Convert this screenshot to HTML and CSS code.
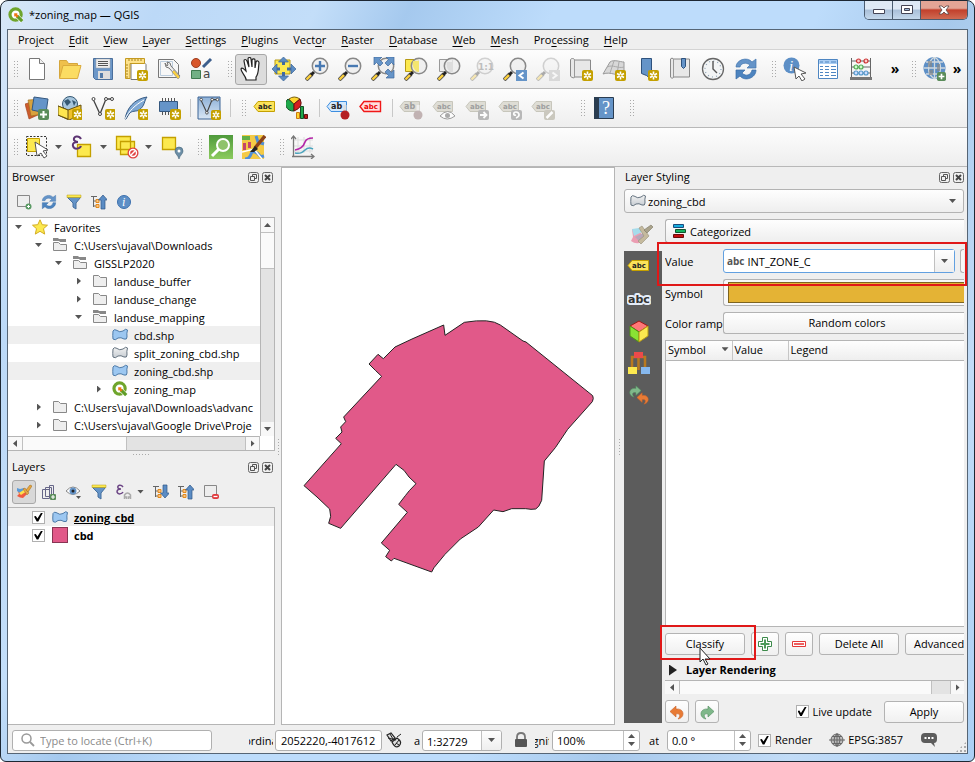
FILE: index.html
```html
<!DOCTYPE html>
<html lang="en">
<head>
<meta charset="utf-8">
<title>*zoning_map — QGIS</title>
<link rel="stylesheet" href="styles.css">
</head>
<body>
<svg class="paints" aria-hidden="true">
  <linearGradient id="gBlue" x1="0" y1="0" x2="0" y2="1"><stop offset="0" stop-color="#8fb2d8"/><stop offset="1" stop-color="#d9e6f4"/></linearGradient>
  <linearGradient id="gGreen" x1="0" y1="0" x2="0" y2="1"><stop offset="0" stop-color="#4f9a3c"/><stop offset="1" stop-color="#8ccb5e"/></linearGradient>
  <linearGradient id="gGrey" x1="0" y1="0" x2="0" y2="1"><stop offset="0" stop-color="#f2f2f2"/><stop offset="1" stop-color="#c6ccd2"/></linearGradient>
</svg>
<svg class="defs" aria-hidden="true">
  <symbol id="star-badge" viewBox="0 0 11 11"><rect width="11" height="11" rx="2" fill="#c4a000"/><path d="M5.500 1.500v8M2 3.500l7 4M9 3.500l-7 4" stroke="#fff" stroke-width="1.600"/><circle cx="5.500" cy="5.500" r="1" fill="#c4a000"/></symbol>
  <symbol id="plus-badge" viewBox="0 0 11 11"><rect width="11" height="11" rx="2" fill="#5a8c5a"/><path d="M5.500 2v7M2 5.500h7" stroke="#fff" stroke-width="2"/></symbol>
  <symbol id="lens" viewBox="0 0 24 24"><path d="M1 23l6-6" stroke="#555" stroke-width="4"/><path d="M1.500 22.500l5-5" stroke="#fcd03c" stroke-width="2.400"/><path d="M6 18l3-3" stroke="#222" stroke-width="3"/><circle cx="15" cy="9" r="7.700" fill="#eee" fill-opacity=".8" stroke="#888" stroke-width="1.500"/></symbol>
  <symbol id="qgis" viewBox="0 0 18 18"><circle cx="8.500" cy="8.500" r="6.300" fill="#fff" stroke="#6fa52c" stroke-width="3.600"/><path d="M9 9l7 7" stroke="#fff" stroke-width="5"/><path d="M10 10l6 6" stroke="#5f9c26" stroke-width="3.600"/><path d="M7 7h4l-1 1 2 2-2 2-2-2-1 1z" fill="#ee7913"/></symbol>
  <symbol id="new" viewBox="0 0 24 24"><path d="M4.500 1.500h10l5 5v16h-15z" fill="#fff" stroke="#777"/><path d="M14.500 1.500v5h5" fill="#eee" stroke="#777"/></symbol>
  <symbol id="open" viewBox="0 0 24 24"><path d="M1.500 21V3.500h7l2 3h9V10" fill="#efc04c" stroke="#d5a63b"/><path d="M1.500 21.500L5 8.500h18l-3.500 13z" fill="#fbdc62" stroke="#dbab3c"/></symbol>
  <symbol id="save" viewBox="0 0 24 24"><path d="M2.500 1.500h19v21h-17l-2-2z" fill="#6c97c8" stroke="#4a6f9c"/><path d="M5 2h14v9H5z" fill="#eee" stroke="#aaa" stroke-width=".5"/><path d="M7 4.500h10M7 6.500h10M7 8.500h10" stroke="#555"/><path d="M7 14h12v8H7z" fill="#ddd"/><path d="M9 16h3v5H9z" fill="#527aa8"/></symbol>
  <symbol id="layout" viewBox="0 0 24 24"><path d="M7 3.500h11l4 4v15H7z" fill="#fff" stroke="#777"/><path d="M1.500 1.500h19v5H6v15H1.500z" fill="#fde28b" stroke="#c49a20"/><path d="M5 2v2M8 2v2M11 2v2M14 2v2M17 2v2M2 8h2M2 11h2M2 14h2M2 17h2M2 20h2" stroke="#a9821b"/><use href="#star-badge" x="13" y="13" width="11" height="11"/></symbol>
  <symbol id="manager" viewBox="0 0 24 24"><path d="M1.500 2.500h15l5 5v13h-20z" fill="#f7f7f7" stroke="#777"/><path d="M3.500 4.500h12v14h-12z" fill="none" stroke="#bcd"/><path d="M8 6l1 4 3 1 9 10 2-2-9-10-1-3-3-1 1 3-1 1z" fill="#eee" stroke="#777"/><path d="M15 15l6 7 2-2-6-7z" fill="#fcd03c" stroke="#999" stroke-width=".7"/></symbol>
  <symbol id="styles" viewBox="0 0 24 24"><circle cx="6" cy="6" r="4.500" fill="#d8562a" stroke="#9d3e20"/><path d="M13 10l8-8" stroke="#3c5e8c" stroke-width="3"/><path d="M1.500 13.500h9v8h-9z" fill="#72b085" stroke="#3f7a4f"/><text x="13" y="21" class="glyph" font-size="12" fill="#444">a</text></symbol>
  <symbol id="hand" viewBox="0 0 24 24"><path d="M7 22c-1-4-5-7-5-10 1-2 3 0 5 2L5 4c0-2 2-2 3 0l2 6-1-8c0-2 3-2 3 0l1 8V3c1-2 3-1 3 0v8l1-6c1-2 3-1 3 1-1 7 0 10-3 14v3H7z" fill="#fff" stroke="#222" stroke-width="1.200"/></symbol>
  <symbol id="pansel" viewBox="0 0 24 24"><path d="M3 3h15v14H3z" fill="#fce94f" stroke="#b79a15"/><path d="M11.500 8V4M11.500 15v4M8 12H4M15 12h4" stroke="#3f6ba3" stroke-width="3"/><path d="M11.500 0l5 5h-10zM11.500 24l5-5h-10zM0 12l5-5v10zM24 12l-5-5v10z" fill="#5b8cc4" stroke="#3c6595" stroke-width=".7"/></symbol>
  <symbol id="zin" viewBox="0 0 24 24"><use href="#lens"/><path d="M15 4v10M10 9h10" stroke="#4879b2" stroke-width="2.400"/></symbol>
  <symbol id="zout" viewBox="0 0 24 24"><use href="#lens"/><path d="M10 9h10" stroke="#4879b2" stroke-width="2.400"/></symbol>
  <symbol id="zfull" viewBox="0 0 24 24"><use href="#lens"/><path d="M3 0h8L8.500 2.500 12 6 9 9 5.500 5.500 3 8zM23 0v8l-2.500-2.500L17 9l-3-3 3.500-3.500L15 0zM23 21h-8l2.500-2.500L14 15l3-3 3.500 3.500L23 13z" fill="#6594c8" stroke="#40699b" stroke-width=".7"/></symbol>
  <symbol id="zsel" viewBox="0 0 24 24"><path d="M1.500 2.500h13v12h-13z" fill="#fce94f" stroke="#b79a15"/><use href="#lens"/><path d="M9 4h6v11c-5 0-7-7-6-11z" fill="#f4e56e"/></symbol>
  <symbol id="zlayer" viewBox="0 0 24 24"><path d="M2.500 2.500h13v12h-13z" fill="#eee" stroke="#999"/><use href="#lens"/><path d="M10 5h5v10c-5-1-6-6-5-10z" fill="#ddd"/></symbol>
  <symbol id="znative" viewBox="0 0 24 24"><use href="#lens"/><text x="8" y="13" class="glyph bold" font-size="9" fill="#555">1:1</text></symbol>
  <symbol id="zprev" viewBox="0 0 24 24"><use href="#lens"/><path d="M13 13h11v11H13z" fill="#6594c8"/><path d="M20.500 15.500l-4 3 4 3" fill="none" stroke="#fff" stroke-width="2"/></symbol>
  <symbol id="znext" viewBox="0 0 24 24"><use href="#lens"/><path d="M13 13h11v11H13z" fill="#aaa"/><path d="M16.500 15.500l4 3-4 3" fill="none" stroke="#fff" stroke-width="2"/></symbol>
  <symbol id="mapview" viewBox="0 0 24 24"><path d="M1.500 3c0-2 4-2 4 0h16v17h-16c0 2-4 0-4-1z" fill="#e8e8e8" stroke="#888"/><path d="M5.500 3v17" stroke="#999"/><use href="#star-badge" x="13" y="13" width="11" height="11"/></symbol>
  <symbol id="map3d" viewBox="0 0 24 24"><path d="M1 17L8 5c4-3 10 0 14 0v12c-7 3-13-3-21 0z" fill="#d8d8d8" stroke="#999"/><path d="M5 10c6-3 11 2 17 0M12 4L8 16M17 5l-2 12" stroke="#aaa" fill="none"/><use href="#star-badge" x="13" y="13" width="11" height="11"/></symbol>
  <symbol id="bmnew" viewBox="0 0 24 24"><path d="M6.500 1.500h10v21l-5-4-5-2z" fill="#6594c8" stroke="#2e527d"/><use href="#star-badge" x="13" y="13" width="11" height="11"/></symbol>
  <symbol id="bookmarks" viewBox="0 0 24 24"><path d="M2.500 2c0-1 3-1 3 0h16v18h-16c0 2-3 1-3 0z" fill="#e8e8e8" stroke="#888"/><path d="M5.500 2v18" stroke="#999"/><path d="M13.500 1.500h4v8l-2 2-2-2z" fill="#6594c8" stroke="#2e527d"/></symbol>
  <symbol id="clock" viewBox="0 0 24 24"><circle cx="12" cy="12" r="10.500" fill="#f2f4f5" stroke="#666" stroke-width="1.300"/><circle cx="12" cy="12" r="8" fill="none" stroke="#8aa0b4" stroke-width="1.200" stroke-dasharray="1 3.190"/><path d="M12 4v8l4 4" stroke="#555" stroke-width="1.400" fill="none"/></symbol>
  <symbol id="refresh" viewBox="0 0 24 24"><path d="M2 10C2 3 13-1 18 5l4-3v9h-9l3-3C12 5 7 6 6 10z" fill="#6594c8" stroke="#4377b0" stroke-width=".7"/><path d="M22 13c0 8-11 12-16 6l-4 3v-9h9l-3 3c4 4 9 2 10-3z" fill="#4d84bf" stroke="#376ca6" stroke-width=".7"/></symbol>
  <symbol id="identify" viewBox="0 0 24 24"><circle cx="8.500" cy="8.500" r="8" fill="#5d8fc6"/><text x="6" y="14" class="serif" font-size="15" fill="#fff">i</text><path d="M11 10l12 6-5 1 4 5-3 2-3-5-3 3z" fill="#fff" stroke="#555"/></symbol>
  <symbol id="table" viewBox="0 0 24 24"><path d="M2.500 2.500h19v19h-19z" fill="#fff" stroke="#4e86c2"/><path d="M3 3h18v4H3z" fill="#a9cdf3"/><path d="M4 5h3M9 5h4M15 5h5M4 9.500h3M9 9.500h4M15 9.500h5M4 12.500h3M9 12.500h4M15 12.500h5M4 15.500h3M9 15.500h4M15 15.500h5M4 18.500h3M9 18.500h4M15 18.500h5" stroke="#4e86c2" stroke-width="1.200"/></symbol>
  <symbol id="abacus" viewBox="0 0 24 24"><path d="M2.500 1v20M21.500 1v20M2 4h20M2 10h20M2 16h20" stroke="#666"/><path d="M1 20h22v3H1z" fill="#777"/><g stroke-width="1.200"><g fill="#fcc" stroke="#c33"><circle cx="9.500" cy="4" r="2"/><circle cx="17" cy="4" r="2"/></g><g fill="#cfc" stroke="#5a5"><circle cx="7" cy="10" r="2"/><circle cx="12" cy="10" r="2"/></g><g fill="#cdf" stroke="#59c"><circle cx="7" cy="16" r="2"/><circle cx="12" cy="16" r="2"/><circle cx="17" cy="16" r="2"/></g></g></symbol>
  <symbol id="globe" viewBox="0 0 24 24"><circle cx="11.500" cy="11" r="11" fill="#5d8fc6"/><path d="M1 11h21M3 5h17M3 17h17M11.500 0v22M11.500 0c-8 5-8 17 0 22M11.500 0c8 5 8 17 0 22" stroke="#cfd8de" stroke-width="1.300" fill="none"/><path d="M5 4h4v6H5zM6 13h4v5H6zM14 7h3v7h-3z" fill="#888" opacity=".7"/><use href="#plus-badge" x="14" y="15" width="9" height="9"/></symbol>
  <symbol id="datasrc" viewBox="0 0 24 24"><path d="M0 8l9-3 4 14-9 4z" fill="#cd5c2c" stroke="#9c421c" stroke-width=".6"/><path d="M3 4l13-1 1 15-11 2z" fill="#d9a23e" stroke="#9a6c1e" stroke-width=".6"/><path d="M9 1l14 2-2 14-14-3z" fill="#6594c8" stroke="#35587f"/><use href="#plus-badge" x="13" y="13" width="11" height="11"/></symbol>
  <symbol id="gpkg" viewBox="0 0 24 24"><circle cx="12" cy="8" r="7.500" fill="#a6c5dd" stroke="#355872"/><path d="M6 5l4-2 3 3-4 4zM14 4l4 2-2 4z" fill="#355872"/><path d="M0 10l10 4 13-5v10l-12 5L0 19z" fill="#f0c12b" stroke="#665310"/><path d="M0 10l10 4v9L0 19z" fill="#ffe650" stroke="#665310"/><use href="#star-badge" x="14" y="13" width="11" height="11"/></symbol>
  <symbol id="vec" viewBox="0 0 24 24"><path d="M2 3l7 15L15 3h6" fill="none" stroke="#444" stroke-width="1.300"/><g fill="#fff" stroke="#444"><circle cx="2.500" cy="3" r="1.500"/><circle cx="9" cy="18" r="1.500"/><circle cx="15" cy="3" r="1.500"/><circle cx="21" cy="3" r="1.500"/></g></symbol>
  <symbol id="newshp" viewBox="0 0 24 24"><use href="#vec"/><use href="#star-badge" x="14" y="13" width="11" height="11"/></symbol>
  <symbol id="spatialite" viewBox="0 0 24 24"><path d="M1 23C3 12 10 3 23 1c-3 4-2 9-8 13-3 2-7 0-10 4l-3 5z" fill="#7fa8d4" stroke="#365a83"/><path d="M1 23C5 15 11 9 20 4" fill="none" stroke="#fff"/><use href="#star-badge" x="14" y="13" width="11" height="11"/></symbol>
  <symbol id="memory" viewBox="0 0 24 24"><path d="M5.500 2v17M8.500 2v17M11.500 2v17M14.500 2v17M17.500 2v17" stroke="#555"/><path d="M2.500 5.500h18v10h-18z" fill="#6594c8" stroke="#35587f"/><use href="#star-badge" x="13" y="13" width="11" height="11"/></symbol>
  <symbol id="virtual" viewBox="0 0 24 24"><path d="M1 1h22v22H1z" fill="url(#gBlue)" stroke="#3c6595"/><use href="#vec" x="2" y="1" width="21" height="21"/><use href="#star-badge" x="14" y="14" width="10" height="10"/></symbol>
  <symbol id="label" viewBox="0 0 24 24"><path d="M5 5.500h16.500v10H5L1 10.500z" fill="#fbe35a" stroke="#c4a000"/><text x="5" y="13" class="glyph bold" font-size="7" fill="#222">abc</text></symbol>
  <symbol id="labelblue" viewBox="0 0 24 24"><path d="M5 5.500h15.500v10H5L1 10.500z" fill="#d4e8fc" stroke="#3c8ee0"/><text x="5" y="13" class="glyph bold" font-size="8" fill="#222">ab</text><path d="M19 9v9" stroke="#ddd" stroke-width="3"/><circle cx="19" cy="19" r="4.500" fill="#b52025"/></symbol>
  <symbol id="labelred" viewBox="0 0 24 24"><path d="M5 5.500h16.500v10H5L1 10.500z" fill="#fdd" stroke="#f01818" stroke-width="1.400"/><text x="5" y="13" class="glyph bold" font-size="7" fill="#e00">abc</text></symbol>
  <symbol id="labelgrey" viewBox="0 0 24 24"><path d="M5 5.500h15.500v10H5L1 10.500z" fill="#d9d7cd" stroke="#bdbbae"/><text x="5" y="13" class="glyph bold" font-size="7" fill="#888">abc</text></symbol>
  <symbol id="pin" viewBox="0 0 24 24"><path d="M5 5.500h15.500v10H5L1 10.500z" fill="#d9d7cd" stroke="#bdbbae"/><text x="5" y="13" class="glyph bold" font-size="8" fill="#888">ab</text><path d="M19 9v9" stroke="#eee" stroke-width="3"/><circle cx="19" cy="19" r="4.500" fill="#b5a3a3"/></symbol>
  <symbol id="eyelab" viewBox="0 0 24 24"><use href="#labelgrey"/><path d="M8 20q8-9 15 0-8 6-15 0z" fill="#fff" stroke="#888"/><circle cx="15.500" cy="19.500" r="2.500" fill="#999"/></symbol>
  <symbol id="movelab" viewBox="0 0 24 24"><use href="#labelgrey"/><rect x="13" y="14" width="11" height="10" rx="2" fill="#aaa"/><path d="M15 19h6M18.500 16l3 3-3 3" stroke="#fff" stroke-width="1.800" fill="none"/></symbol>
  <symbol id="rotlab" viewBox="0 0 24 24"><use href="#labelgrey"/><rect x="13" y="14" width="11" height="10" rx="2" fill="#aaa"/><path d="M18 22c5-2 3-6 0-6s-3 4 0 3" stroke="#fff" stroke-width="1.700" fill="none"/></symbol>
  <symbol id="editlab" viewBox="0 0 24 24"><use href="#labelgrey"/><rect x="13" y="14" width="11" height="10" rx="2" fill="#c1beb2"/><path d="M15.500 22l6-6" stroke="#fff" stroke-width="2.500"/></symbol>
  <symbol id="diagram" viewBox="0 0 24 24"><path d="M8 8L2 3a8 7 0 0 0 6 12z" fill="#1fa84b" stroke="#174d25"/><path d="M8 8L3 3q5-4 11 0z" fill="#ffd52e" stroke="#765f12"/><path d="M8 8l6-5q4 8-6 12z" fill="#d62020" stroke="#641010"/><path d="M10.500 16.500h3v6h-3z" fill="#ffd52e" stroke="#c97a12"/><path d="M14.500 10.500h3v12h-3z" fill="#1fa84b" stroke="#174d25"/><path d="M18.500 18.500h3v4h-3z" fill="#c01818" stroke="#641010"/></symbol>
  <symbol id="help" viewBox="0 0 24 24"><path d="M2.500 1.500h19v21h-19z" fill="#6594c8" stroke="#2a3c50"/><path d="M2 1h5v22H2z" fill="#2a3c50"/><text x="10" y="18" class="serif upright" font-size="18" fill="#fff">?</text></symbol>
  <symbol id="select" viewBox="0 0 24 24"><path d="M1.500 1.500h20v19h-20z" fill="none" stroke="#333" stroke-dasharray="2 1.500"/><path d="M2.500 3.500h12v13h-12z" fill="#fce94f" stroke="#c4a000"/><path d="M10 7l13 8-5 1 4 5-3 2-3-5-4 3z" fill="#fff" stroke="#555"/></symbol>
  <symbol id="selexpr" viewBox="0 0 24 24"><path d="M7.500 9.500h13v12h-13z" fill="#fce94f" stroke="#c4a000" stroke-width="1.300"/><path d="M11 4C9 0 3 1 4 5q1 2 4 2-6 0-5 4c1 4 7 3 8 0" fill="none" stroke="#5d3473" stroke-width="2"/></symbol>
  <symbol id="desel" viewBox="0 0 24 24"><path d="M1.500 1.500h14v13h-14zM5.500 6.500h14v13h-14z" fill="#fce94f" stroke="#c4a000" stroke-width="1.300"/><circle cx="18" cy="18" r="5.500" fill="#e04040"/><circle cx="18" cy="18" r="3.500" fill="none" stroke="#fff" stroke-width="1.400"/><path d="M15.500 20.500l5-5" stroke="#fff" stroke-width="1.500"/></symbol>
  <symbol id="selloc" viewBox="0 0 24 24"><path d="M2.500 2.500h13v12h-13z" fill="#fce94f" stroke="#c4a000" stroke-width="1.300"/><path d="M19 24c-1-4-4-5-4-8a4 4 0 0 1 8 0c0 3-3 4-4 8z" fill="#6c8ea6" stroke="#456478" stroke-width=".6"/><circle cx="19" cy="16" r="1.500" fill="#fff"/></symbol>
  <symbol id="osmsearch" viewBox="0 0 24 24"><path d="M0 0h24v24H0z" fill="url(#gGreen)"/><circle cx="14" cy="10" r="6" fill="#8fc36b" stroke="#fff" stroke-width="2"/><path d="M3 21l7-7" stroke="#fff" stroke-width="3"/></symbol>
  <symbol id="osm" viewBox="0 0 24 24"><path d="M0 0h22v24H0z" fill="#f4ca45"/><path d="M0 1h8v4H0z" fill="#62b046"/><path d="M3 24c8 0 4-9 10-7s3 6 9 4M14 1l2 6 6 2" fill="none" stroke="#4f8fd8" stroke-width="3"/><path d="M1 8h3v7H1zM6 7h3v6H6z" fill="#c4456a"/><path d="M0 17l12-3 8 10" stroke="#fff" stroke-width="1.500" fill="none"/><path d="M13 13L23 1" stroke="#8a431c" stroke-width="3.500"/><path d="M8 17l5-6 3 3-4 3z" fill="#222"/></symbol>
  <symbol id="profile" viewBox="0 0 24 24"><path d="M7 2v16M13 2v16M19 2v16M3 5h19M3 11h19M3 16h19" stroke="#ddd"/><path d="M2.500 22V2M0 4l2.500-3L5 4M1 21.500h21M20 19l3 2.500-3 2.500" fill="none" stroke="#777" stroke-width="1.300"/><path d="M4 15c7-1 9-5 10-8s4-4 8-4" fill="none" stroke="#b426a8" stroke-width="1.700"/><path d="M4 18c6 1 8-1 10-3s4-3 8-1" fill="none" stroke="#4aa3bd" stroke-width="1.600"/></symbol>
  <symbol id="addlayer" viewBox="0 0 16 16"><path d="M1.500 1.500h12v11h-12z" fill="#eee" stroke="#888"/><circle cx="12.500" cy="12.500" r="3" fill="#5a9a64"/><path d="M11 12.500h3M12.500 11v3" stroke="#fff"/></symbol>
  <symbol id="funnel" viewBox="0 0 16 16"><path d="M1.500 3.500h13L10 9v6l-3-2V9z" fill="#6594c8" stroke="#456f9e"/><path d="M1 1h14v2.500H1z" fill="#fce94f" stroke="#b79a15" stroke-width=".5"/></symbol>
  <symbol id="tree" viewBox="0 0 16 16"><path d="M0 2.500h6M2.500 2v11M2.500 7h4M2.500 12h4" stroke="#666" fill="none"/><path d="M5 5.500h3v3H5zM5 10.500h3v3H5z" fill="#ffc37d" stroke="#e28a1e"/></symbol>
  <symbol id="collapse" viewBox="0 0 16 16"><use href="#tree"/><path d="M10 15V6H7.500L12 1l4.500 5H14v9z" fill="#5b8cc4" stroke="#2e5687" stroke-width=".7"/></symbol>
  <symbol id="expand" viewBox="0 0 16 16"><use href="#tree"/><path d="M10 1v8H7.500l4.500 5 4.500-5H14V1z" fill="#5b8cc4" stroke="#2e5687" stroke-width=".7"/></symbol>
  <symbol id="info" viewBox="0 0 16 16"><circle cx="8" cy="8" r="6.500" fill="#5d8fc6" stroke="#3c70ae"/><text x="6" y="12" class="serif" font-size="12" fill="#fff">i</text></symbol>
  <symbol id="brush" viewBox="0 0 16 16"><path d="M1 5l4 1 3-2 4 5-5 5q-3 0-6-2l2-2z" fill="#f05a40"/><path d="M1 4l3 1 4-1 1 2-5 3-3-2z" fill="#5b9bd8"/><path d="M3 9l6-4 2 2-6 4z" fill="#ffe04a"/><path d="M7 5l2-1 4 5-2 2z" fill="#e2a34a" stroke="#a57425" stroke-width=".5"/><path d="M10 6l4-5 2 1-4 6z" fill="#e9a63b" stroke="#a57425" stroke-width=".6"/></symbol>
  <symbol id="palebrush" viewBox="0 0 24 24"><path d="M2 6l7 1 5 8-5 5q-4 1-8-2l2-4z" fill="#eb9db2"/><path d="M2 6l7-1 3 4-8 4z" fill="#a5dceb"/><path d="M5 14l8-4 3 4-6 5z" fill="#b8a7b9"/><path d="M9 5l3-2 7 10-8 8-3-3 6-5z" fill="#c5ba9e" stroke="#968e78" stroke-width=".6"/><path d="M14 7l7-5 2 2-6 6z" fill="#aaa38c" stroke="#7c7762" stroke-width=".6"/></symbol>
  <symbol id="group" viewBox="0 0 16 16"><path d="M1.500 5.500h7v9h-7zM4.500 3.500h6v9h-6zM8.500 1.500h4v10h-4z" fill="#eee" stroke="#668"/><use href="#plus-badge" x="9" y="10" width="6" height="6"/></symbol>
  <symbol id="eye" viewBox="0 0 16 16"><path d="M0 7q7-8 14 0-7 7-14 0z" fill="#fff" stroke="#888"/><circle cx="7" cy="7" r="3.500" fill="#6594c8"/><circle cx="7" cy="7" r="1.500" fill="#222"/><path d="M10 12h5l-2.500 3z" fill="#555"/></symbol>
  <symbol id="exprfilter" viewBox="0 0 16 16"><path d="M7 3C5 0 1 1 2 4q1 1 3 1-4 0-4 3c1 3 5 2 6 0" fill="none" stroke="#6c4585" stroke-width="1.500"/><path d="M8.500 15v-4q3-4 6 0v4M8.500 13h2v2M14.500 13h-2v2" fill="none" stroke="#aaa" stroke-width="1.500"/></symbol>
  <symbol id="remove" viewBox="0 0 16 16"><path d="M1.500 1.500h12v11h-12z" fill="#eee" stroke="#888"/><rect x="9" y="10" width="7" height="5" rx="2" fill="#e0393c"/><path d="M10.500 12.500h4" stroke="#fff" stroke-width="1.300"/></symbol>
  <symbol id="star" viewBox="0 0 16 16"><path d="M8 .8l2.200 4.900 5.300.5-4 3.500 1.200 5.400L8 12.300l-4.700 2.800 1.200-5.400-4-3.500 5.300-.5z" fill="#fce94f" stroke="#d3ac20"/></symbol>
  <symbol id="folder" viewBox="0 0 16 16"><path d="M1.500 13.500v-11h5l2 2h6v9z" fill="#eee" stroke="#888"/></symbol>
  <symbol id="folderopen" viewBox="0 0 16 16"><path d="M1 1h5l1 1h7v3H8L7 4H1z" fill="#888"/><path d="M1.500 13.500v-8h5l2 2h6v6z" fill="#eee" stroke="#888"/></symbol>
  <symbol id="polyblue" viewBox="0 0 16 14"><path d="M1 3Q2 1 4 2Q8 5 11 3Q14 0 15.500 2Q14.500 5 15 9Q15 12 12 11Q9 9 6 10Q3 13 1 11Q.500 8 1 3z" fill="#9cc7f1" stroke="#4d7aa8"/></symbol>
  <symbol id="polygrey" viewBox="0 0 16 14"><path d="M1 3Q2 1 4 2Q8 5 11 3Q14 0 15.500 2Q14.500 5 15 9Q15 12 12 11Q9 9 6 10Q3 13 1 11Q.500 8 1 3z" fill="url(#gGrey)" stroke="#657380"/></symbol>
  <symbol id="float" viewBox="0 0 11 11"><rect x=".5" y=".5" width="10" height="10" rx="2" fill="none" stroke="#666"/><path d="M4.500 4.500V2.500h4v4h-2M2.500 4.500h4v4h-4z" fill="none" stroke="#555"/></symbol>
  <symbol id="close" viewBox="0 0 11 11"><rect x=".5" y=".5" width="10" height="10" rx="2" fill="none" stroke="#666"/><path d="M3 3l5 5M8 3l-5 5" stroke="#444" stroke-width="2"/></symbol>
  <symbol id="categ" viewBox="0 0 14 14"><path d="M.5 .500h10v3H.5z" fill="#17aee0" stroke="#1a4c7c"/><path d="M2.500 5.500h10v3h-10z" fill="#13b560" stroke="#11532d"/><path d="M.5 10.500h10v3H.5z" fill="#c71010" stroke="#6a0c0c"/></symbol>
  <symbol id="halo" viewBox="0 0 24 24"><text x="1" y="16" class="glyph bold halo" font-size="11" fill="#333">abc</text></symbol>
  <symbol id="cube" viewBox="0 0 24 24"><path d="M12 2l9 5-9 6-9-6z" fill="#f77" stroke="#a11616"/><path d="M3 7l9 6v10l-9-6z" fill="#8ae234" stroke="#4e8f16"/><path d="M21 7l-9 6v10l9-6z" fill="#fce94f" stroke="#b79a15"/></symbol>
  <symbol id="diagrams" viewBox="0 0 24 24"><path d="M5 16V6h13v10M11.500 7v12" fill="none" stroke="#b9791f" stroke-width="2.500"/><path d="M7 1h9v6H7z" fill="#ec4a4a"/><path d="M1 16h9v7H1z" fill="#fce94f"/><path d="M14 16h9v7h-9z" fill="#86b8ee"/></symbol>
  <symbol id="undo" viewBox="0 0 16 16"><path d="M7 2v3c9-1 9 9 2 10 3-3 2-6-2-5v3L1 7.500z" fill="#e87b35" stroke="#c76128" stroke-width=".6"/></symbol>
  <symbol id="redo" viewBox="0 0 16 16"><path d="M9 2v3c-9-1-9 9-2 10-3-3-2-6 2-5v3l6-5.500z" fill="#7fb88a" stroke="#4f8a5c" stroke-width=".6"/></symbol>
  <symbol id="history" viewBox="0 0 24 24"><use href="#redo" x="1" y="1" width="14" height="14"/><use href="#undo" x="9" y="8" width="14" height="14"/></symbol>
  <symbol id="add" viewBox="0 0 16 16"><path d="M5.500 1.500h5v4h4v5h-4v4h-5v-4h-4v-5h4z" fill="#fff" stroke="#3c8a4a"/><path d="M8 3.500v9M3.500 8h9" stroke="#4c9a5a" stroke-width="2"/></symbol>
  <symbol id="minus" viewBox="0 0 16 16"><path d="M1.500 5.500h13v5h-13z" fill="#fff" stroke="#e33a3a"/><path d="M3 8h10" stroke="#f06060" stroke-width="2"/></symbol>
  <symbol id="search" viewBox="0 0 16 16"><circle cx="6.500" cy="6.500" r="4.500" fill="none" stroke="#999" stroke-width="1.500"/><path d="M10 10l4 4" stroke="#999" stroke-width="1.800"/></symbol>
  <symbol id="mouse" viewBox="0 0 16 16"><path d="M1 3l4-2 4 5-4 3zM6 10l5-4q6 4 2 8-4 3-7-4z" fill="#ddd" stroke="#222" stroke-width="1.200"/><path d="M2 6l8 2M4 2l3 5M9 13l4-5M15 2l-4 3M10 11l3 2" stroke="#222"/></symbol>
  <symbol id="lock" viewBox="0 0 16 16"><path d="M4 8V5q0-4 4-4t4 4v3" fill="none" stroke="#777" stroke-width="1.800"/><rect x="2" y="7" width="12" height="8" rx="1" fill="#555"/></symbol>
  <symbol id="crs" viewBox="0 0 16 16"><circle cx="8" cy="8" r="6" fill="#bbb" stroke="#666"/><path d="M0 8h16M3 4.500h10M3 11.500h10M8 1v14M8 2q-6 6 0 12M8 2q6 6 0 12" stroke="#666" fill="none"/></symbol>
  <symbol id="bubble" viewBox="0 0 16 16"><path d="M4 1h8q4 0 4 4v2q0 4-3 4l1 4-4-4H4q-4 0-4-4V5q0-4 4-4z" fill="#5c5c5c"/><path d="M3.500 5h2v2h-2zM7 5h2v2H7zM10.500 5h2v2h-2z" fill="#fff"/></symbol>
</svg>

<div class="window">
  <header class="titlebar">
    <svg class="i16"><use href="#qgis"/></svg>
    <h1>*zoning_map — QGIS</h1>
    <div class="caption">
      <button aria-label="Minimize"><svg viewBox="0 0 12 10"><path d="M.5 4.500h11v4H.5z" fill="#fff" stroke="#445"/></svg></button>
      <button aria-label="Maximize"><svg viewBox="0 0 12 10"><path d="M.5.5h11v8H.5z" fill="#fff" stroke="#445"/><path d="M3.500 3.500h5v2h-5z" fill="#9cb8d8" stroke="#445"/></svg></button>
      <button class="x" aria-label="Close"><svg viewBox="0 0 12 10"><path d="M1 1h3l2 2 2-2h3L8 5l3 4H8L6 7 4 9H1l3-4z" fill="#fff" stroke="#544" stroke-width=".8"/></svg></button>
    </div>
  </header>

  <div class="client">
    <nav class="menu">
      <button>Pro<u>j</u>ect</button><button><u>E</u>dit</button><button><u>V</u>iew</button><button><u>L</u>ayer</button><button><u>S</u>ettings</button><button><u>P</u>lugins</button><button>Vect<u>o</u>r</button><button><u>R</u>aster</button><button><u>D</u>atabase</button><button><u>W</u>eb</button><button><u>M</u>esh</button><button>Pro<u>c</u>essing</button><button><u>H</u>elp</button>
    </nav>

    <div class="toolbar">
      <i class="grip first"></i>
      <button aria-label="New"><svg><use href="#new"/></svg></button>
      <button aria-label="Open"><svg><use href="#open"/></svg></button>
      <button aria-label="Save"><svg><use href="#save"/></svg></button>
      <button aria-label="New layout"><svg><use href="#layout"/></svg></button>
      <button aria-label="Layout manager"><svg><use href="#manager"/></svg></button>
      <button aria-label="Style manager"><svg><use href="#styles"/></svg></button>
      <i class="grip"></i>
      <button class="on" aria-label="Pan"><svg><use href="#hand"/></svg></button>
      <button aria-label="Pan to selection"><svg><use href="#pansel"/></svg></button>
      <button aria-label="Zoom in"><svg><use href="#zin"/></svg></button>
      <button aria-label="Zoom out"><svg><use href="#zout"/></svg></button>
      <button aria-label="Zoom full"><svg><use href="#zfull"/></svg></button>
      <button aria-label="Zoom to selection"><svg><use href="#zsel"/></svg></button>
      <button aria-label="Zoom to layer"><svg><use href="#zlayer"/></svg></button>
      <button class="off" aria-label="Native resolution"><svg><use href="#znative"/></svg></button>
      <button aria-label="Zoom last"><svg><use href="#zprev"/></svg></button>
      <button class="off" aria-label="Zoom next"><svg><use href="#znext"/></svg></button>
      <button aria-label="New map view"><svg><use href="#mapview"/></svg></button>
      <button aria-label="New 3D view"><svg><use href="#map3d"/></svg></button>
      <button aria-label="New bookmark"><svg><use href="#bmnew"/></svg></button>
      <button aria-label="Bookmarks"><svg><use href="#bookmarks"/></svg></button>
      <button aria-label="Temporal controller"><svg><use href="#clock"/></svg></button>
      <button aria-label="Refresh"><svg><use href="#refresh"/></svg></button>
      <i class="grip"></i>
      <button aria-label="Identify"><svg><use href="#identify"/></svg></button>
      <button aria-label="Attribute table"><svg><use href="#table"/></svg></button>
      <button aria-label="Field calculator"><svg><use href="#abacus"/></svg></button>
      <button class="more">»</button>
      <i class="grip"></i>
      <button aria-label="Add web layer"><svg><use href="#globe"/></svg></button>
      <button class="more end">»</button>
    </div>

    <div class="toolbar">
      <i class="grip first"></i>
      <button aria-label="Data source manager"><svg><use href="#datasrc"/></svg></button>
      <button aria-label="New GeoPackage"><svg><use href="#gpkg"/></svg></button>
      <button aria-label="New shapefile"><svg><use href="#newshp"/></svg></button>
      <button aria-label="New SpatiaLite"><svg><use href="#spatialite"/></svg></button>
      <button aria-label="New scratch layer"><svg><use href="#memory"/></svg></button>
      <i class="sep"></i>
      <button aria-label="New virtual layer"><svg><use href="#virtual"/></svg></button>
      <i class="sep"></i>
      <i class="grip"></i>
      <button aria-label="Labels"><svg><use href="#label"/></svg></button>
      <button aria-label="Diagrams"><svg><use href="#diagram"/></svg></button>
      <i class="sep"></i>
      <button aria-label="Pinned labels"><svg><use href="#labelblue"/></svg></button>
      <button aria-label="Unplaced labels"><svg><use href="#labelred"/></svg></button>
      <i class="sep"></i>
      <button class="dim" aria-label="Pin labels"><svg><use href="#pin"/></svg></button>
      <button class="dim" aria-label="Show labels"><svg><use href="#eyelab"/></svg></button>
      <button class="dim" aria-label="Move label"><svg><use href="#movelab"/></svg></button>
      <button class="dim" aria-label="Rotate label"><svg><use href="#rotlab"/></svg></button>
      <button class="dim" aria-label="Change label"><svg><use href="#editlab"/></svg></button>
      <i class="grip far"></i>
      <button aria-label="Help"><svg><use href="#help"/></svg></button>
      <i class="grip"></i>
    </div>

    <div class="toolbar">
      <i class="grip first"></i>
      <button class="split" aria-label="Select"><svg><use href="#select"/></svg><i class="down"></i></button>
      <button class="split" aria-label="Select by expression"><svg><use href="#selexpr"/></svg><i class="down"></i></button>
      <button class="split" aria-label="Deselect"><svg><use href="#desel"/></svg><i class="down"></i></button>
      <button aria-label="Select by location"><svg><use href="#selloc"/></svg></button>
      <i class="grip"></i>
      <button aria-label="OSM search"><svg><use href="#osmsearch"/></svg></button>
      <button aria-label="OSM editor"><svg><use href="#osm"/></svg></button>
      <i class="grip"></i>
      <button aria-label="Profile tool"><svg><use href="#profile"/></svg></button>
    </div>

    <main>
      <div class="left">
        <section class="browser">
          <div class="dock"><h2>Browser</h2><button aria-label="Float"><svg><use href="#float"/></svg></button><button aria-label="Close"><svg><use href="#close"/></svg></button></div>
          <div class="minibar">
            <button aria-label="Add"><svg><use href="#addlayer"/></svg></button>
            <button aria-label="Refresh"><svg><use href="#refresh"/></svg></button>
            <button aria-label="Filter"><svg><use href="#funnel"/></svg></button>
            <button aria-label="Collapse all"><svg><use href="#collapse"/></svg></button>
            <button aria-label="Properties"><svg><use href="#info"/></svg></button>
          </div>
          <div class="treebox">
            <ul class="files">
              <li class="l0"><i class="down"></i><svg><use href="#star"/></svg><span>Favorites</span></li>
              <li class="l1"><i class="down"></i><svg><use href="#folderopen"/></svg><span>C:\Users\ujaval\Downloads</span></li>
              <li class="l2"><i class="down"></i><svg><use href="#folderopen"/></svg><span>GISSLP2020</span></li>
              <li class="l3"><i class="right"></i><svg><use href="#folder"/></svg><span>landuse_buffer</span></li>
              <li class="l3"><i class="right"></i><svg><use href="#folder"/></svg><span>landuse_change</span></li>
              <li class="l3"><i class="down"></i><svg><use href="#folderopen"/></svg><span>landuse_mapping</span></li>
              <li class="l4 alt"><i></i><svg><use href="#polyblue"/></svg><span>cbd.shp</span></li>
              <li class="l4"><i></i><svg><use href="#polygrey"/></svg><span>split_zoning_cbd.shp</span></li>
              <li class="l4 alt"><i></i><svg><use href="#polyblue"/></svg><span>zoning_cbd.shp</span></li>
              <li class="l4"><i class="right"></i><svg><use href="#qgis"/></svg><span>zoning_map</span></li>
              <li class="l1"><i class="right"></i><svg><use href="#folder"/></svg><span>C:\Users\ujaval\Downloads\advanc</span></li>
              <li class="l1"><i class="right"></i><svg><use href="#folder"/></svg><span>C:\Users\ujaval\Google Drive\Proje</span></li>
            </ul>
            <div class="vscroll"><button aria-label="Up"><i class="up"></i></button><b></b><button aria-label="Down"><i class="down"></i></button></div>
            <div class="hscroll"><button aria-label="Left"><i class="leftarrow"></i></button><b></b><button aria-label="Right"><i class="right"></i></button></div>
          </div>
        </section>
        <div class="hsplit"><i></i></div>
        <section class="layers">
          <div class="dock"><h2>Layers</h2><button aria-label="Float"><svg><use href="#float"/></svg></button><button aria-label="Close"><svg><use href="#close"/></svg></button></div>
          <div class="minibar">
            <button class="on" aria-label="Layer styling"><svg><use href="#brush"/></svg></button>
            <button aria-label="Add group"><svg><use href="#group"/></svg></button>
            <button aria-label="Map themes"><svg><use href="#eye"/></svg></button>
            <button aria-label="Filter"><svg><use href="#funnel"/></svg></button>
            <button class="wide" aria-label="Filter by expression"><svg><use href="#exprfilter"/></svg><i class="down"></i></button>
            <button aria-label="Expand all"><svg><use href="#expand"/></svg></button>
            <button aria-label="Collapse all"><svg><use href="#collapse"/></svg></button>
            <button aria-label="Remove layer"><svg><use href="#remove"/></svg></button>
          </div>
          <div class="layerbox">
            <label class="alt"><input type="checkbox" checked><svg><use href="#polyblue"/></svg><span class="cur">zoning_cbd</span></label>
            <label><input type="checkbox" checked><i class="chip"></i><span>cbd</span></label>
          </div>
        </section>
      </div>
      <div class="vsplit"><i></i></div>
      <div class="canvas">
        <svg viewBox="68 28 873 762"><path d="M71 528L183 402 166 386 185 367 181 352 196 336 190 322 304 200 285 182 266 163 293 134 309 147 344 112 395 88 490 46 494 77 552 38Q630 25 660 46L728 94 737 97 937 258Q941 266 936 276L862 359 825 414 792 454 784 572Q776 594 766 598L752 599 736 597H694L668 606 640 601 594 652 540 688 494 734 461 774 454 787 341 746 333 754 316 741 328 722 303 700 381 608 355 584 375 558 387 543 407 522 386 502 371 482 347 464 181 656 145 641 151 620 148 598 110 562z" fill="#e15989" stroke="#232323" stroke-width="3" stroke-linejoin="round"/></svg>
      </div>
      <div class="vsplit"><i></i></div>
      <section class="styling">
        <div class="dock"><h2>Layer Styling</h2><button aria-label="Float"><svg><use href="#float"/></svg></button><button aria-label="Close"><svg><use href="#close"/></svg></button></div>
        <div class="combo layercombo"><svg class="i16"><use href="#polygrey"/></svg><select aria-label="Layer"><option>zoning_cbd</option></select><i class="down"></i></div>
        <div class="body">
          <div class="tabs">
            <button class="sel" aria-label="Symbology"><svg><use href="#palebrush"/></svg></button>
            <button aria-label="Labels"><svg><use href="#label"/></svg></button>
            <button aria-label="Masks"><svg><use href="#halo"/></svg></button>
            <button aria-label="3D view"><svg><use href="#cube"/></svg></button>
            <button aria-label="Diagrams"><svg><use href="#diagrams"/></svg></button>
            <button aria-label="History"><svg><use href="#history"/></svg></button>
          </div>
          <div class="panel">
            <div class="scroll">
              <div class="combo cut"><svg class="i14"><use href="#categ"/></svg><select aria-label="Renderer"><option>Categorized</option></select></div>
              <div class="field value"><label for="val">Value</label>
                <div class="combo focus"><b>abc</b><select id="val"><option>INT_ZONE_C</option></select><span class="drop"><i class="down"></i></span></div>
                <button class="stub" aria-label="Expression"></button></div>
              <div class="field"><label for="sym">Symbol</label><button id="sym" class="swatch" aria-label="Symbol"><i></i></button></div>
              <div class="field"><label for="ramp">Color ramp</label><button id="ramp" class="btn cut">Random colors</button></div>
              <div class="classes"><table><thead><tr><th>Symbol<i class="down"></i></th><th>Value</th><th>Legend</th></tr></thead></table></div>
              <div class="actions">
                <button class="btn w80">Classify</button>
                <button class="btn sq" aria-label="Add"><svg class="i16"><use href="#add"/></svg></button>
                <button class="btn sq" aria-label="Delete"><svg class="i16"><use href="#minus"/></svg></button>
                <button class="btn w80">Delete All</button>
                <button class="btn adv">Advanced</button>
              </div>
              <button class="rendering"><i class="bigright"></i>Layer Rendering</button>
            </div>
            <div class="hscroll"><button aria-label="Left"><i class="leftarrow"></i></button><b></b><button aria-label="Right"><i class="right"></i></button></div>
            <div class="foot">
              <button class="btn undo" aria-label="Undo"><svg class="i16"><use href="#undo"/></svg></button>
              <button class="btn undo" aria-label="Redo"><svg class="i16"><use href="#redo"/></svg></button>
              <label class="live"><input type="checkbox" checked>Live update</label>
              <button class="btn w80">Apply</button>
            </div>
            <i class="mark mark-value"></i>
            <i class="mark mark-classify"></i>
            <svg class="pointer" viewBox="0 0 12 19"><path d="M1 1v14l3-3 3 6 2-1-3-5h5z" fill="#fff" stroke="#222"/></svg>
          </div>
        </div>
      </section>
    </main>

    <footer class="status">
      <label class="locate"><svg class="i16"><use href="#search"/></svg><input type="text" placeholder="Type to locate (Ctrl+K)" aria-label="Locate"></label>
      <label class="clip coordlab" for="coord"><span>ordina</span></label>
      <input id="coord" class="box coord" type="text" value="2052220,-4017612">
      <button class="plain mouse" aria-label="Toggle extents"><svg class="i16"><use href="#mouse"/></svg></button>
      <label class="clip scalelab" for="scale">a</label>
      <div class="combo scale"><select id="scale"><option>1:32729</option></select><span class="drop"><i class="down"></i></span></div>
      <button class="plain lock" aria-label="Lock scale"><svg class="i16"><use href="#lock"/></svg></button>
      <label class="clip maglab" for="mag"><span>gnif</span></label>
      <div class="spin mag"><input id="mag" type="text" value="100%"><span><i class="up"></i><i class="down"></i></span></div>
      <label class="clip rotlab" for="rot">at</label>
      <div class="spin rot"><input id="rot" type="text" value="0.0 °"><span><i class="up"></i><i class="down"></i></span></div>
      <label class="render"><input type="checkbox" checked>Render</label>
      <button class="plain epsg"><svg class="i16"><use href="#crs"/></svg>EPSG:3857</button>
      <button class="plain msg" aria-label="Messages"><svg class="i16"><use href="#bubble"/></svg></button>
      <i class="sizegrip"></i>
    </footer>
  </div>
</div>
</body>
</html>
```
FILE: styles.css
```css
* { box-sizing: border-box; }
html, body { height: 100%; margin: 0; }
body { font: 11px/18px "Open Sans", "Noto Sans", sans-serif; color: #000; background: #fff; }
button, input, select { font: inherit; color: inherit; margin: 0; }
button { padding: 0; border: 0; background: none; }
svg, i { display: block; flex: none; }
h1, h2 { margin: 0; font: inherit; }
ul { margin: 0; padding: 0; list-style: none; }
select { appearance: none; border: 0; background: none; padding: 0; outline: 0; }
.defs { display: none; }
.paints { position: absolute; width: 0; height: 0; }
.glyph { font-family: "DejaVu Sans", sans-serif; }
.serif { font-family: "Liberation Serif", serif; font-style: italic; }
.upright { font-style: normal; }
.bold { font-weight: 700; }
.halo { paint-order: stroke; stroke: #e4ecf8; stroke-width: 4px; stroke-linejoin: round; }
.i16 { width: 16px; height: 16px; }
.i14 { width: 14px; height: 14px; }

/* arrows */
.down { width: 7px; height: 4px; background: #555; clip-path: polygon(0 0, 100% 0, 50% 100%); }
.up { width: 7px; height: 4px; background: #555; clip-path: polygon(0 100%, 100% 100%, 50% 0); }
.right { width: 4px; height: 7px; background: #555; clip-path: polygon(0 0, 100% 50%, 0 100%); }
.leftarrow { width: 4px; height: 7px; background: #555; clip-path: polygon(100% 0, 0 50%, 100% 100%); }
.bigright { width: 8px; height: 11px; background: #222; clip-path: polygon(0 0, 100% 50%, 0 100%); }

/* window */
.window { height: 100vh; display: flex; flex-direction: column; padding: 0 6px 7px; border: 1px solid #1d2733; border-radius: 8px 8px 6px 6px;
  background: linear-gradient(115deg, #d7e7f8 0, #bcd9f7 12%, #c3def9 24%, #a5c9ee 31%, #bddcfb 42%, #bddcfb 62%, #a7c9ec 72%, #c2dcf7 86%, #abd0f5 100%); }
.titlebar { height: 28px; display: flex; flex: none; align-items: flex-start; padding-left: 1px; }
.titlebar .i16 { margin-top: 6px; }
.titlebar h1 { flex: 1; margin: 5px 0 0 5px; }
.caption { display: flex; border: 1px solid #4b5c70; border-top: 0; border-radius: 0 0 5px 5px; overflow: hidden; height: 19px; }
.caption button { width: 28px; display: grid; place-items: center; background: linear-gradient(#dfe9f5 45%, #a9bfd8 50%, #c4d8ec); border-right: 1px solid #4b5c70; }
.caption svg { width: 12px; height: 10px; }
.caption .x { width: 46px; border: 0; background: linear-gradient(#e3a596 40%, #c2402c 50%, #cf6a52); }
.client { flex: 1; min-height: 0; display: flex; flex-direction: column; border: 1px solid #566575; background: #efefef; }

.menu { display: flex; gap: 1px; height: 20px; flex: none; padding-left: 3px; border-bottom: 1px solid #d4d4d4; }
.menu button { padding: 1px 7px 0; line-height: 18px; }
.menu u { text-underline-offset: 2px; }

.toolbar { display: flex; align-items: center; height: 39px; flex: none; background: linear-gradient(#fdfdfd, #eeeeee); border-bottom: 1px solid #b8b8b8; }
.toolbar button { width: 32px; height: 31px; margin-right: 1px; display: flex; align-items: center; padding-left: 4px; }
.toolbar svg { width: 24px; height: 24px; overflow: visible; }
.toolbar .on { border: 1px solid #a8a8a8; border-radius: 3px; background: #dcdcdc; padding-left: 3px; }
.toolbar .off svg { opacity: .35; }
.toolbar .dim svg { opacity: .8; }
.toolbar .split { width: 44px; gap: 6px; }
.toolbar .more { width: 14px; margin-left: 10px; padding: 0; font-size: 14px; font-weight: 700; justify-content: center; }
.toolbar .more.end { margin-left: -2px; }
.grip { width: 5px; height: 18px; margin: 0 3px 0 8px; background: radial-gradient(circle, #aaa 1px, transparent 1px) 0 0 / 3px 3px; }
.grip.first { margin-left: 5px; }
.grip.far { margin-left: 20px; }
.sep { width: 1px; height: 18px; margin: 0 2px 0 4px; background: #c8c8c8; }

main { flex: 1; min-height: 0; display: grid; grid-template-columns: 267px 6px minmax(0, 1fr) 9px 340px 3px; }
.left { display: flex; flex-direction: column; min-width: 0; min-height: 0; padding-bottom: 2px; }
.dock { display: flex; align-items: center; height: 20px; padding: 0 2px 0 4px; gap: 3px; flex: none; }
.dock h2 { flex: 1; }
.dock svg { width: 11px; height: 11px; }
.minibar { display: flex; align-items: center; height: 29px; padding-left: 4px; margin-bottom: 1px; flex: none; }
.minibar button { width: 24px; height: 24px; margin-right: 1px; display: flex; align-items: center; padding-left: 4px; }
.minibar svg { width: 16px; height: 16px; overflow: visible; }
.minibar .on { border: 1px solid #a8a8a8; border-radius: 3px; background: #d8d8d8; padding-left: 3px; }
.minibar .wide { width: 36px; gap: 5px; }
.treebox { height: 234px; display: grid; grid-template: minmax(0, 1fr) 14px / minmax(0, 1fr) 14px; background: #fff; border: 1px solid #b5b5b5; border-left: 0; }
.files { overflow: hidden; }
.files li { display: flex; align-items: center; height: 18px; white-space: pre; }
.files span { padding-top: 2px; }
.files i { width: 7px; margin: 0 10px 0 7px; }
.files .right { width: 4px; margin: 0 11px 0 9px; }
.files svg { width: 16px; height: 16px; margin-right: 6px; }
.l1 { padding-left: 20px; }
.l2 { padding-left: 40px; }
.l3 { padding-left: 60px; }
.l4 { padding-left: 80px; }
.alt { background: #efefef; }
.vscroll { display: flex; flex-direction: column; background: #e3e3e3; border-left: 1px solid #b5b5b5; }
.vscroll button { height: 14px; display: grid; place-items: center; background: #f8f8f8; }
.vscroll b { height: 37px; margin-bottom: auto; background: #fafafa; border: solid #c0c0c0; border-width: 1px 0; }
.hscroll { display: flex; height: 14px; background: #e3e3e3; border-top: 1px solid #b5b5b5; }
.treebox .hscroll { border-right: 1px solid #c0c0c0; }
.hscroll button { width: 14px; display: grid; place-items: center; background: #f8f8f8; flex: none; }
.hscroll button:last-child { border-left: 1px solid #c0c0c0; }
.hscroll b { width: 105px; margin-right: auto; background: #fafafa; border: solid #c0c0c0; border-width: 0 1px; }
.hsplit { height: 6px; flex: none; display: grid; place-items: center; }
.hsplit i { width: 17px; height: 1px; background: repeating-linear-gradient(90deg, #aaa 0 1px, transparent 1px 3px); }
.vsplit { display: grid; place-items: center; }
.vsplit i { width: 1px; height: 17px; background: repeating-linear-gradient(#aaa 0 1px, transparent 1px 3px); }
.layers { flex: 1; min-height: 0; display: flex; flex-direction: column; }
.layerbox { flex: 1; background: #fff; border: 1px solid #b5b5b5; border-left: 0; }
.layerbox label { display: flex; align-items: center; height: 18px; padding-left: 24px; font-weight: 700; }
.layerbox input { margin-right: 7px; }
.layerbox span { padding-top: 2px; }
.layerbox svg { width: 16px; height: 15px; margin-right: 6px; }
.chip { width: 16px; height: 16px; margin-right: 6px; background: #e15989; border: 1px solid #883553; }
.cur { text-decoration: underline; }

input[type="checkbox"] { appearance: none; width: 13px; height: 13px; flex: none; background: #fff; border: 1px solid #b0b0b0; }
input[type="checkbox"]:checked::before { content: ""; display: block; width: 9px; height: 9px; margin: 1px; background: #000; clip-path: polygon(0 45%, 20% 40%, 38% 68%, 80% 0, 100% 0, 48% 100%, 30% 100%); }

.canvas { background: #fff; border: 1px solid #b5b5b5; margin: 0 0 2px; display: grid; place-items: center; }
.canvas svg { width: 291px; height: 254px; }

/* layer styling */
.styling { display: flex; flex-direction: column; min-height: 0; padding-bottom: 4px; }
.styling .dock { padding: 0 0 0 1px; }
.combo { display: flex; align-items: center; height: 24px; background: linear-gradient(#fefefe, #eeeeee); border: 1px solid #b3b3b3; border-radius: 3px; }
.combo select { flex: 1; min-width: 0; height: 100%; padding-top: 2px; }
.layercombo { flex: none; margin: 2px 0 0; padding: 0 7px 0 5px; gap: 2px; }
.body { flex: 1; min-height: 0; display: grid; grid-template-columns: 38px minmax(0, 1fr); gap: 3px; margin-top: 6px; }
.tabs { display: flex; flex-direction: column; background: #5c5c5c; }
.tabs button { height: 32px; display: grid; place-items: center; padding-right: 8px; }
.tabs .sel { background: #efefef; padding: 0 2px 0 0; }
.tabs svg { width: 24px; height: 24px; overflow: visible; }
.panel { position: relative; display: flex; flex-direction: column; min-height: 0; }
.scroll { flex: 1; min-height: 0; display: flex; flex-direction: column; overflow: hidden; }
.cut { border-right: 0; border-radius: 3px 0 0 3px; }
.scroll > .combo { flex: none; padding-left: 7px; gap: 3px; }
.field { display: grid; grid-template-columns: 58px minmax(0, 1fr); align-items: center; flex: none; margin-top: 6px; }
.field label { padding-top: 2px; white-space: nowrap; }
.value { grid-template-columns: 58px minmax(0, 1fr) 4px; }
.value .combo { background: #fff; border-color: #62a0e0; padding-left: 3px; gap: 3px; margin-right: 5px; }
.value b { color: #555; font-size: 10px; }
.drop { height: 100%; width: 20px; display: grid; place-items: center; border-left: 1px solid #c0c0c0; background: linear-gradient(#fefefe, #eeeeee); }
.stub { height: 24px; border: 1px solid #b3b3b3; border-right: 0; border-radius: 3px 0 0 3px; background: #f8f8f8; }
.swatch { height: 27px; padding: 2px 0 2px 4px; border: 1px solid #b3b3b3; border-right: 0; border-radius: 3px 0 0 3px; background: #f8f8f8; }
.swatch i { height: 21px; background: #e4b335; border: 1px solid #7d6420; border-right: 0; }
.btn { height: 22px; display: grid; place-items: center; border: 1px solid #b3b3b3; border-radius: 3px; background: linear-gradient(#fefefe, #f0f0f0); flex: none; }
.btn.cut { border-right: 0; border-radius: 3px 0 0 3px; padding-left: 6px; }
.w80 { width: 80px; }
.classes { flex: 1; min-height: 0; margin-top: 6px; background: #fff; border: 1px solid #b5b5b5; border-right: 0; }
.classes table { width: 100%; border-collapse: collapse; table-layout: fixed; background: linear-gradient(#fefefe, #eeeeee); }
.classes th { height: 19px; padding: 0 2px; font-weight: 400; text-align: left; line-height: 18px; border-bottom: 1px solid #b5b5b5; border-right: 1px solid #c6c6c6; }
.classes th:first-child { width: 66px; }
.classes th:nth-child(2) { width: 56px; }
.classes th:last-child { border-right: 0; }
.classes th .down { float: right; margin: 6px 1px 0 0; }
.actions { display: flex; gap: 6px; margin-top: 5px; flex: none; align-items: center; }
.sq { width: 28px; height: 24px; }
.adv { width: 80px; justify-content: start; padding-left: 8px; }
.rendering { display: flex; align-items: center; gap: 9px; height: 18px; margin: 5px 0 1px; padding-left: 4px; font-weight: 700; flex: none; }
.panel > .hscroll { flex: none; }
.panel > .hscroll b { flex: 1; margin-right: 18px; }
.foot { display: flex; align-items: center; gap: 6px; margin-top: 6px; flex: none; }
.undo { width: 24px; height: 23px; }
.live { display: flex; align-items: center; gap: 4px; margin-left: auto; margin-right: 6px; }
.mark { position: absolute; border: 2px solid #e01818; }
.mark-value { left: -8px; right: -3px; top: 23px; height: 44px; }
.mark-classify { left: -5px; width: 96px; bottom: 63px; height: 35px; }
.pointer { position: absolute; left: 34px; bottom: 57px; width: 12px; height: 19px; }

/* status bar */
.status { display: flex; align-items: center; height: 26px; flex: none; padding-left: 4px; }
.status input[type="text"] { border: 0; outline: 0; background: none; padding: 1px 0 0; width: 100%; min-width: 0; }
.locate, .spin, .status .box, .status .combo { height: 21px; display: flex; align-items: center; background: #fff; border: 1px solid #b0b0b0; border-radius: 3px; }
.locate { width: 200px; padding-left: 7px; gap: 4px; }
.locate input::placeholder { color: #8a8a8a; opacity: 1; }
.clip { overflow: hidden; display: flex; justify-content: center; padding-top: 1px; }
.coordlab { width: 24px; margin: 0 2px 0 auto; }
.status input.coord { width: 107px; padding: 1px 5px 0; border: 1px solid #b0b0b0; background: #fff; }
.plain { display: flex; align-items: center; }
.mouse { margin: 0 12px 0 4px; }
.scale { width: 80px; margin-left: 2px; padding-left: 4px; overflow: hidden; }
.lock { margin: 0 6px 0 11px; }
.maglab { width: 14px; margin-right: 3px; }
.spin { padding-left: 4px; }
.spin > span { width: 16px; flex: none; height: 100%; display: flex; flex-direction: column; align-items: center; justify-content: center; gap: 4px; border-left: 1px solid #c0c0c0; }
.mag { width: 88px; }
.rotlab { margin: 0 8px 0 9px; }
.rot { width: 84px; }
.render { display: flex; align-items: center; gap: 4px; margin-left: 7px; }
.epsg { gap: 3px; margin-left: 17px; }
.msg { margin: 0 18px 0 18px; }
.sizegrip { width: 12px; height: 12px; align-self: flex-end; background: radial-gradient(circle, #aaa 1px, transparent 1px) 0 0 / 4px 4px; clip-path: polygon(100% 0, 100% 100%, 0 100%); }
```
